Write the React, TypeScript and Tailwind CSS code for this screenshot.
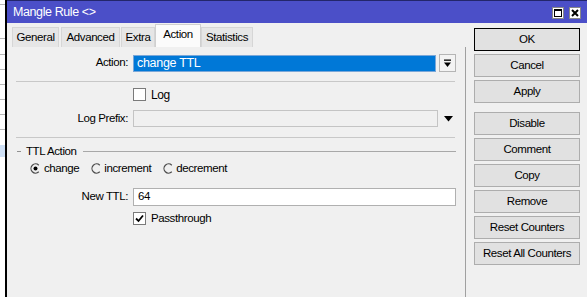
import React from "react";

const font = { fontFamily: '"Liberation Sans", Arial, sans-serif' };

function Checkbox({ checked }: { checked?: boolean }) {
  return (
    <div className="w-[13px] h-[13px] border border-[#7a7a7a] bg-white flex items-center justify-center">
      {checked && (
        <svg width="9" height="9" viewBox="0 0 9 9">
          <path d="M1 4.5 L3.5 7 L8 1.5" stroke="#000" strokeWidth="1.8" fill="none" />
        </svg>
      )}
    </div>
  );
}

function Radio({ checked }: { checked?: boolean }) {
  return (
    <svg width="11" height="11" viewBox="0 0 11 11">
      <path d="M8.8 2.2 A4.6 4.6 0 1 0 8.8 8.8" stroke="#4a4a4a" strokeWidth="1.2" fill="none" />
      {checked && <circle cx="5.5" cy="5.5" r="2" fill="#000" />}
    </svg>
  );
}

const txt = "text-[11.5px] tracking-[-0.4px] text-black";

function Btn({ label, primary }: { label: string; primary?: boolean }) {
  return (
    <div
      className={`w-[106px] h-[23px] flex items-center justify-center bg-[#e1e1e1] border ${txt} ${
        primary ? "border-black" : "border-[#adadad]"
      }`}
    >
      {label}
    </div>
  );
}

export default function App() {
  const tabs = [
    { name: "General", w: "w-[47px]", ml: "ml-0" },
    { name: "Advanced", w: "w-[59px]", ml: "ml-[2px]" },
    { name: "Extra", w: "w-[34px]", ml: "ml-[1px]" },
    { name: "Action", w: "w-[46px]", ml: "ml-0", sel: true },
    { name: "Statistics", w: "w-[52px]", ml: "ml-0" },
  ];
  const stripLines = [4, 38, 54, 69, 84, 99, 114, 129];
  return (
    <div className="w-[587px] h-[297px] flex overflow-hidden bg-[#f0f0f0]" style={font}>
      {/* background strip */}
      <div className="w-[5px] h-full bg-white flex flex-col relative">
        {stripLines.map((y) => (
          <div key={y} className="absolute left-0 w-[5px] h-px bg-[#b8b8b8]" style={{ top: y }} />
        ))}
        <div className="absolute left-0 top-[145px] w-[5px] h-[12px] bg-[#cfe0f5]" />
      </div>
      <div className="w-[2px] h-full bg-black" />
      {/* window */}
      <div className="flex-1 flex flex-col">
        <div className="h-[23px] bg-[#4b4fc8] border-t border-[#23266b] flex items-center justify-between pl-[6px] pr-[6px]">
          <span className="text-white text-[12.5px] tracking-[-0.4px] leading-none mt-[1px]">Mangle Rule &lt;&gt;</span>
          <div className="flex gap-[5px] items-center mt-[2px]">
            <div className="w-[12px] h-[12px] bg-white border border-[#888] flex items-center justify-center">
              <div className="w-[8px] h-[8px] border border-black border-t-2" />
            </div>
            <div className="w-[12px] h-[12px] bg-white border border-[#888] flex items-center justify-center">
              <svg width="8" height="8" viewBox="0 0 8 8">
                <path d="M1 1 L7 7 M7 1 L1 7" stroke="#000" strokeWidth="2" />
              </svg>
            </div>
          </div>
        </div>
        <div className="flex-1 flex">
          {/* left panel */}
          <div className="w-[458px] flex flex-col">
            <div className="h-[24px] flex items-end pl-[5px]">
              {tabs.map((t) => (
                <div
                  key={t.name}
                  className={`${t.w} ${t.ml} flex items-center justify-center ${txt} border border-b-0 ${
                    t.sel
                      ? "h-[23px] bg-[#fbfbfb] border-[#d0d0d0] pb-[3px]"
                      : "h-[20px] bg-[#e6e6e6] border-[#d6d6d6]"
                  }`}
                >
                  {t.name}
                </div>
              ))}
            </div>
            <div className="flex-1 flex flex-col">
              {/* Action row */}
              <div className="mt-[7px] h-[18px] flex items-center">
                <div className={`w-[121px] text-right ${txt}`}>Action:</div>
                <div className="ml-[5px] w-[303px] h-[17px] bg-[#0078d7] border border-[#7aa7d8] flex items-center pl-[3px] text-white text-[12.5px] tracking-[-0.3px]">
                  change TTL
                </div>
                <div className="ml-[3px] w-[17px] h-[18px] border border-[#b5b5b5] bg-[#f3f3f3] flex items-center justify-center">
                  <svg width="9" height="9" viewBox="0 0 9 9">
                    <rect x="1" y="0.5" width="7" height="1.3" fill="#000" />
                    <path d="M1 3.5 L8 3.5 L4.5 8 Z" fill="#000" />
                  </svg>
                </div>
              </div>
              <div className="mt-[9px] ml-[9px] w-[439px] h-px bg-[#c8c8c8]" />
              {/* Log */}
              <div className="mt-[6px] h-[13px] flex items-center pl-[126px]">
                <Checkbox />
                <span className={`ml-[5px] ${txt} text-[12px]`}>Log</span>
              </div>
              {/* Log prefix */}
              <div className="mt-[9px] h-[17px] flex items-center">
                <div className={`w-[121px] text-right ${txt}`}>Log Prefix:</div>
                <div className="ml-[5px] w-[305px] h-[17px] border border-[#c4c4c4] bg-[#f0f0f0]" />
                <svg className="ml-[6px]" width="9" height="6" viewBox="0 0 9 6">
                  <path d="M0 0 L9 0 L4.5 5.5 Z" fill="#000" />
                </svg>
              </div>
              <div className="mt-[10px] ml-[9px] w-[439px] h-px bg-[#c8c8c8]" />
              {/* TTL Action group */}
              <div className="mt-[7px] h-[13px] flex items-center pl-[10px]">
                <div className="w-[4px] h-px bg-[#909090]" />
                <span className={`ml-[5px] ${txt}`}>TTL Action</span>
                <div className="ml-[6px] w-[373px] h-px bg-[#a8a8a8]" />
              </div>
              <div className={`mt-[4px] h-[13px] flex items-center pl-[23px] ${txt}`}>
                <Radio checked />
                <span className="ml-[3px]">change</span>
                <span className="ml-[12px] flex"><Radio /></span>
                <span className="ml-[2px]">increment</span>
                <span className="ml-[12px] flex"><Radio /></span>
                <span className="ml-[2px]">decrement</span>
              </div>
              {/* New TTL */}
              <div className="mt-[13px] h-[18px] flex items-center">
                <div className={`w-[121px] text-right ${txt}`}>New TTL:</div>
                <div className={`ml-[5px] w-[323px] h-[18px] border border-[#b0b0b0] bg-white flex items-center pl-[4px] ${txt}`}>
                  64
                </div>
              </div>
              <div className="mt-[6px] h-[13px] flex items-center pl-[126px]">
                <Checkbox checked />
                <span className={`ml-[5px] ${txt}`}>Passthrough</span>
              </div>
            </div>
          </div>
          <div className="w-px bg-[#a0a0a0] mt-[24px]" />
          {/* right buttons */}
          <div className="flex-1 flex flex-col pl-[8px] pt-[5px]">
            <div className="flex flex-col gap-[3px]">
              <Btn label="OK" primary />
              <Btn label="Cancel" />
              <Btn label="Apply" />
            </div>
            <div className="flex flex-col gap-[3px] mt-[9px]">
              <Btn label="Disable" />
              <Btn label="Comment" />
              <Btn label="Copy" />
              <Btn label="Remove" />
              <Btn label="Reset Counters" />
              <Btn label="Reset All Counters" />
            </div>
          </div>
        </div>
      </div>
    </div>
  );
}
